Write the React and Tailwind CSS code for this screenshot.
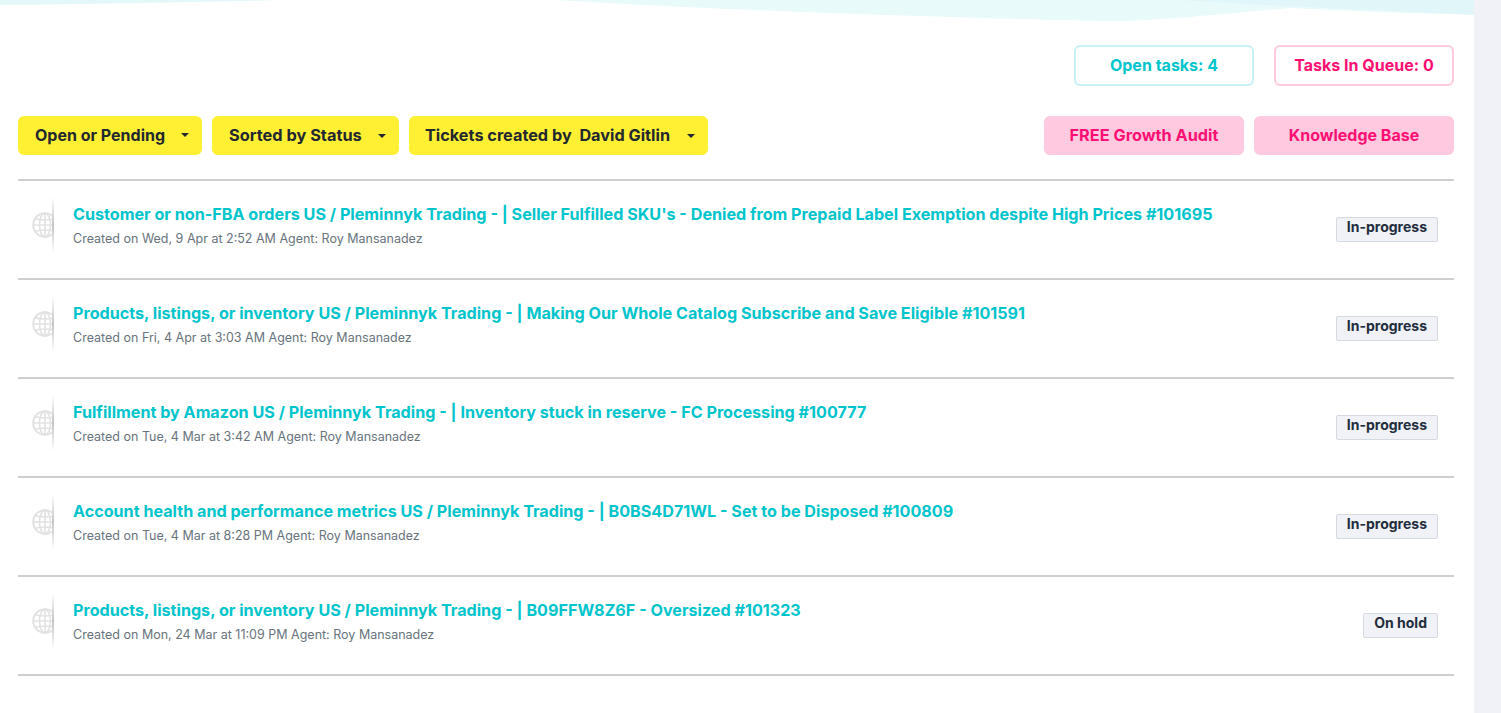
const TICKETS = [
  {
    title: "Customer or non-FBA orders US / Pleminnyk Trading - | Seller Fulfilled SKU's - Denied from Prepaid Label Exemption despite High Prices #101695",
    meta: 'Created on Wed, 9 Apr at 2:52 AM Agent: Roy Mansanadez',
    status: 'In-progress',
  },
  {
    title: 'Products, listings, or inventory US / Pleminnyk Trading - | Making Our Whole Catalog Subscribe and Save Eligible #101591',
    meta: 'Created on Fri, 4 Apr at 3:03 AM Agent: Roy Mansanadez',
    status: 'In-progress',
  },
  {
    title: 'Fulfillment by Amazon US / Pleminnyk Trading - | Inventory stuck in reserve - FC Processing #100777',
    meta: 'Created on Tue, 4 Mar at 3:42 AM Agent: Roy Mansanadez',
    status: 'In-progress',
  },
  {
    title: 'Account health and performance metrics US / Pleminnyk Trading - | B0BS4D71WL - Set to be Disposed #100809',
    meta: 'Created on Tue, 4 Mar at 8:28 PM Agent: Roy Mansanadez',
    status: 'In-progress',
  },
  {
    title: 'Products, listings, or inventory US / Pleminnyk Trading - | B09FFW8Z6F - Oversized #101323',
    meta: 'Created on Mon, 24 Mar at 11:09 PM Agent: Roy Mansanadez',
    status: 'On hold',
  },
];

function Filter({ children, className }) {
  return (
    <button className={`flex h-[39px] items-center justify-between rounded-[6px] bg-[#fff033] pr-[13px] font-bold text-[#222730] ${className}`}>
      <span className="whitespace-pre">{children}</span>
      <span className="h-0 w-0 border-x-[4px] border-t-[4px] border-x-transparent border-t-[#222730]" />
    </button>
  );
}

// globe gets cut off on its right side by the divider
function GlobeMark() {
  return (
    <div className="relative mt-[16px] h-[56px] w-[22px] shrink-0 overflow-hidden">
      <svg className="absolute left-0 top-[15px] h-[26px] w-[26px]" viewBox="0 0 26 26" fill="none" stroke="#e2e2e2" strokeWidth="1.6">
        <circle cx="13" cy="13" r="11.8" strokeWidth="2" />
        <ellipse cx="13" cy="13" rx="5.5" ry="11.8" />
        <path d="M13 1V25M1 13H25M3 6.5C8 8.5 18 8.5 23 6.5M3 19.5C8 17.5 18 17.5 23 19.5" />
      </svg>
      <div className="absolute right-0 top-0 h-full w-[2px] bg-gradient-to-b from-white via-[#c4c4c4] to-white" />
    </div>
  );
}

function TicketRow({ ticket }) {
  return (
    <div className="flex h-[99px] border-b-2 border-[#cfcfcf]">
      <div className="ml-[14px]">
        <GlobeMark />
      </div>
      <div className="ml-[19px] min-w-0 flex-1 pt-[21px]">
        <div className="text-[16.15px] leading-[24px] font-bold text-[#00c4cc] whitespace-nowrap">{ticket.title}</div>
        <div className="mt-[4px] text-[12.5px] leading-[18px] text-[#68737d] whitespace-nowrap">{ticket.meta}</div>
      </div>
      <div className="mr-[16px] flex shrink-0 pt-[36px]">
        <span className="h-[25px] rounded-[2px] border border-[#d5d9e0] bg-[#f0f2f7] px-[10px] text-[14px] leading-[18px] font-bold text-[#1f2d3d]">
          {ticket.status}
        </span>
      </div>
    </div>
  );
}

export default function App() {
  return (
    <div className="relative flex h-[713px] overflow-hidden bg-white font-['Inter','Liberation_Sans',sans-serif]">
      <svg className="absolute left-0 top-0 h-[21px] w-[1501px]" viewBox="0 0 1501 21" preserveAspectRatio="none">
        <path d="M0 0H290C190 2 90 4 0 5Z" fill="#e4f8f9" />
        <path d="M555 0H1501V15C1420 14 1350 11 1290 8C1220 14 1170 20 1120 21C980 19 760 12 555 0Z" fill="#e9fafb" />
        <path d="M1180 0H1474V15C1420 11 1300 8 1180 0Z" fill="#e1f6f9" />
        <path d="M1474 0H1501V15H1474Z" fill="#e2f4f6" />
      </svg>

      <main className="relative min-w-0 flex-1 pl-[18px] pr-[20px] pt-[45px]">
        <div className="flex justify-end gap-[20px]">
          <div className="flex h-[41px] w-[180px] items-center justify-center rounded-[6px] border-2 border-[#c9f2f4] bg-white pb-[2px] text-[16px] font-bold text-[#00c4cc]">
            Open tasks: 4
          </div>
          <div className="flex h-[41px] w-[180px] items-center justify-center rounded-[6px] border-2 border-[#ffc9e0] bg-white pb-[2px] text-[16px] font-bold text-[#ff0f73]">
            Tasks In Queue: 0
          </div>
        </div>

        <div className="mt-[30px] flex items-center gap-[10px]">
          <Filter className="w-[184px] pb-[1px] pl-[17px] text-[16px]">Open or Pending</Filter>
          <Filter className="w-[187px] pl-[17px] text-[16.35px]">Sorted by Status</Filter>
          <Filter className="w-[299px] pl-[16px] text-[16.25px]">Tickets created by  David Gitlin</Filter>
          <div className="flex-1" />
          <button className="h-[39px] w-[200px] rounded-[6px] bg-[#ffc9e0] text-[16.3px] font-bold text-[#ff0f73]">FREE Growth Audit</button>
          <button className="h-[39px] w-[200px] rounded-[6px] bg-[#ffc9e0] pb-[2px] text-[16px] font-bold text-[#ff0f73]">Knowledge Base</button>
        </div>

        <div className="mt-[24px] border-t-2 border-[#cfcfcf]">
          {TICKETS.map((t) => (
            <TicketRow key={t.title} ticket={t} />
          ))}
        </div>
      </main>

      <div className="relative w-[27px] shrink-0 bg-[#f0f2f7]" />
    </div>
  );
}
